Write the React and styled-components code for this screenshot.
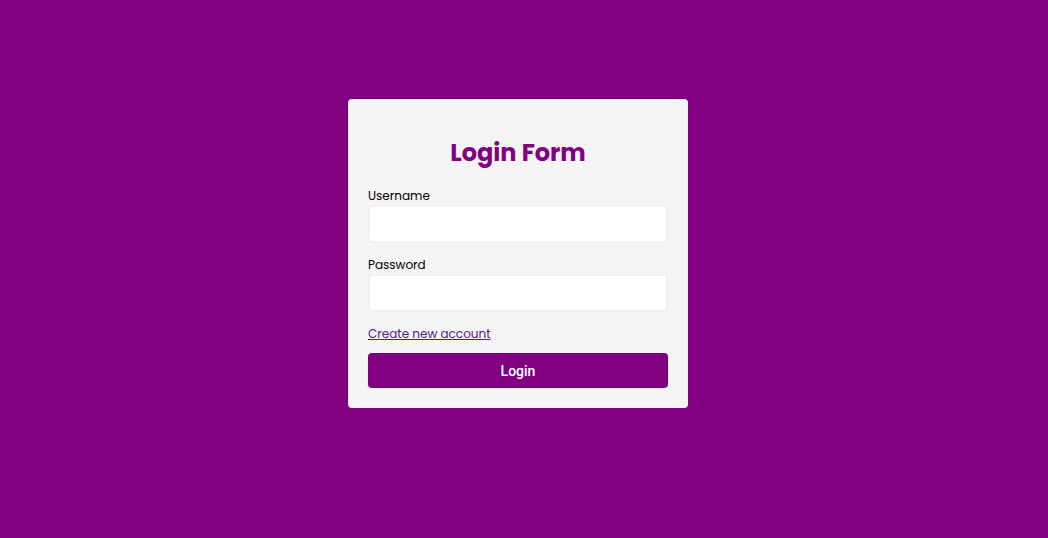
import React from "react";
import styled, { createGlobalStyle } from "styled-components";

const GlobalStyle = createGlobalStyle`
  *, *::before, *::after { box-sizing: border-box; }
  body {
    margin: 0;
    background: #800080;
    color: #000;
    font-family: Poppins, Inter, "Open Sans", sans-serif;
    font-size: 12px;
    line-height: 19px;
  }
`;

const Page = styled.main`
  min-height: 100vh;
  display: flex;
  align-items: center;
  justify-content: center;
  padding: 0 12px 31px 0;
`;

const Card = styled.form`
  width: 100%;
  max-width: 340px;
  padding: 20px;
  border-radius: 4px;
  background: #f4f4f4;
`;

const Title = styled.h1`
  margin: 16px 0;
  color: #800080;
  font-size: 24px;
  font-weight: 700;
  line-height: 35px;
  text-align: center;
`;

const Field = styled.div`
  margin-bottom: 12px;
`;

const Label = styled.label`
  display: block;
  font-weight: 400;
`;

const Input = styled.input`
  display: block;
  width: 100%;
  height: 38px;
  padding: 8px;
  border: 2px solid #f0f0f0;
  border-radius: 4px;
  background: #fff;
  font: inherit;
`;

const AccountLink = styled.a`
  display: block;
  width: fit-content;
  margin-bottom: 10px;
  color: #551a8b;
  font-weight: 400;
  text-decoration: underline;
`;

const SubmitButton = styled.button`
  display: block;
  width: 100%;
  height: 35px;
  padding: 0;
  border: 0;
  border-radius: 4px;
  background: #800080;
  color: #fff;
  font-family: Roboto, sans-serif;
  font-size: 14px;
  font-weight: 500;
  cursor: pointer;
`;

export default function App() {
  return (
    <>
      <GlobalStyle />
      <Page>
        <Card onSubmit={(event) => event.preventDefault()}>
          <Title>Login Form</Title>
          <Field>
            <Label htmlFor="username">Username</Label>
            <Input id="username" type="text" autoComplete="username" />
          </Field>
          <Field>
            <Label htmlFor="password">Password</Label>
            <Input id="password" type="password" autoComplete="current-password" />
          </Field>
          <AccountLink href="#register">Create new account</AccountLink>
          <SubmitButton type="submit">Login</SubmitButton>
        </Card>
      </Page>
    </>
  );
}
